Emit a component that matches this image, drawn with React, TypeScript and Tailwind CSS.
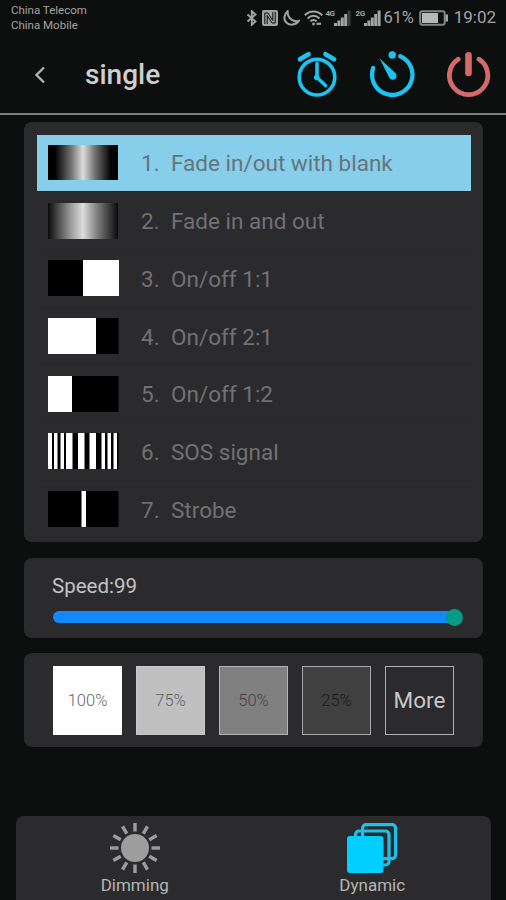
import { useState } from "react";
import type { ReactNode } from "react";

const MODES: { name: string; swatch: ReactNode }[] = [
  { name: "Fade in/out with blank", swatch: <div className="h-[35px] w-[70px] bg-[linear-gradient(90deg,#000_0%,#000_10%,#777_34%,#dcdcdc_50%,#777_66%,#000_90%,#000_100%)]" /> },
  { name: "Fade in and out", swatch: <div className="h-[36px] w-[70px] bg-[linear-gradient(90deg,#0a0a0a_0%,#999_32%,#dcdcdc_50%,#888_68%,#0a0a0a_100%)]" /> },
  { name: "On/off 1:1", swatch: <Bars bars={[[35, 36]]} /> },
  { name: "On/off 2:1", swatch: <Bars bars={[[0, 48]]} /> },
  { name: "On/off 1:2", swatch: <Bars bars={[[0, 24]]} /> },
  { name: "SOS signal", swatch: <Bars bars={[[0, 4], [6, 3.5], [12.5, 3.5], [18, 6.5], [30, 6.5], [41.5, 6.5], [53.5, 3.5], [59.5, 3.5], [65.5, 3.5]]} /> },
  { name: "Strobe", swatch: <Bars bars={[[33.5, 4.5]]} /> },
];

const LEVELS = [
  { label: "100%", style: "bg-white text-[#666] border-white" },
  { label: "75%", style: "bg-[#c0c0c0] text-[#5e5e5e] border-[#cacaca]" },
  { label: "50%", style: "bg-[#808080] text-[#404040] border-[#b4b4b4]" },
  { label: "25%", style: "bg-[#404040] text-[#1c1c1c] border-[#a8a8a8]" },
];

function Bars({ bars }: { bars: number[][] }) {
  return (
    <svg width="71" height="36" viewBox="0 0 71 36">
      <rect width="70.5" height="36" fill="#000" />
      {bars.map(([x, w]) => <rect key={x} x={x} width={w} height="36" fill="#fff" />)}
    </svg>
  );
}

function Signal({ weak }: { weak?: boolean }) {
  return (
    <svg className="-ml-px" width="17" height="16" viewBox="0 0 17 16" fill="currentColor">
      <rect x="0" y="13" width="3" height="3" />
      <rect x="3.4" y="10.5" width="3" height="5.5" />
      <rect x="6.8" y="7.5" width="3" height="8.5" />
      <rect x="10.2" y="4" width="3" height="12" />
      <rect x="13.6" y="0.5" width="3" height="15.5" opacity={weak ? 0.3 : 1} />
    </svg>
  );
}

function StatusBar() {
  return (
    <div className="flex h-9 justify-between pr-[10px] pl-[11px] text-[#a3a3a3]">
      <div className="pt-[3px] text-[11.5px] leading-[15px]">
        <div>China Telecom</div>
        <div>China Mobile</div>
      </div>
      <div className="flex h-[35px] items-center">
        <svg width="12" height="16" viewBox="0 0 12 16" fill="none" stroke="currentColor" strokeWidth="1.9">
          <path d="M1.5 4.5 9.5 11.5 5.8 14.8V1.2L9.5 4.5 1.5 11.5" />
        </svg>
        <svg className="ml-1" width="16" height="16" viewBox="0 0 16 16">
          <rect width="16" height="16" rx="2" fill="currentColor" />
          <path d="M2.8 14V3L6 3 10.8 10.500V2M13.200 2v11L10 13 5.200 5.500V14" fill="none" stroke="#0d0f0e" strokeWidth="1" />
        </svg>
        <svg className="ml-[5px]" width="17" height="16" viewBox="0 0 17 16" fill="none" stroke="currentColor" strokeWidth="2">
          <path d="M4.6 1.2C1 4.5.2 9.4 3.3 12.5c3.4 3.4 9.7 2.6 12.5-1.6C11.6 12.2 4.5 9.5 4.6 1.2Z" />
        </svg>
        <svg className="ml-1" width="19" height="16" viewBox="0 0 19 16" fill="none" stroke="currentColor" strokeWidth="2.1">
          <path d="M.8 5.2C5.8.2 13.2.2 18.2 5.2M3.6 8.4c3.5-3.5 8.3-3.5 11.8 0M6.4 11.3c1.8-1.8 4.4-1.8 6.2 0" />
          <circle cx="9.5" cy="14" r="1.4" fill="currentColor" stroke="none" />
          <path d="M12.5 13.8h4.5" />
        </svg>
        <span className="ml-[3px] h-4 text-[8px] leading-[7px] font-bold tracking-[-0.5px]">4G</span>
        <Signal weak />
        <span className="ml-[5px] h-4 text-[8px] leading-[7px] font-bold tracking-[-0.5px]">2G</span>
        <Signal />
        <span className="ml-[3px] pt-px text-[16.5px] tracking-[-0.2px]">61%</span>
        <svg className="ml-[5px]" width="30" height="16" viewBox="0 0 30 16">
          <rect x="1.2" y="1.2" width="24.5" height="13.6" rx="2" fill="none" stroke="#858585" strokeWidth="2" />
          <rect x="3" y="3" width="16" height="10" fill="#b8b8b8" />
          <rect x="26.5" y="4.5" width="2.5" height="7" fill="currentColor" />
        </svg>
        <span className="ml-[5px] text-[17px]">19:02</span>
      </div>
    </div>
  );
}

function Header() {
  return (
    <header className="flex h-[79px] items-center border-b-2 border-[#7d7d7d] pr-[14px] pl-[34px]">
      <svg width="12" height="18" viewBox="0 0 12 18" fill="none" stroke="#b0b0b0" strokeWidth="2.4">
        <path d="M10 1.5 2.5 9l7.5 7.5" />
      </svg>
      <h1 className="ml-[39px] pt-px text-[28px] font-medium text-[#cfcfcf]">single</h1>
      <div className="mr-px ml-auto flex">
        <svg width="46" height="48" viewBox="0 0 46 48" fill="none" stroke="#1cc3f0" strokeLinecap="round">
          <circle cx="23" cy="26.2" r="17.8" strokeWidth="3.6" />
          <path d="M6 8.300 14.500 3.300M31.500 3.300 40 8.300" strokeWidth="4.800" />
          <path d="M23 12.500V26.500L31.500 34.500" strokeWidth="3.600" />
          <circle cx="22.7" cy="26.5" r="2" fill="#1cc3f0" strokeWidth="1.5" />
        </svg>
        <svg className="ml-[29px]" width="46" height="48" viewBox="0 0 46 48" fill="none" stroke="#1cc3f0" strokeLinecap="round">
          <path d="M31.300 5.200A20.200 20.200 0 1 1 4.200 17" strokeWidth="4.300" />
          <circle cx="23.2" cy="4" r="3.7" fill="#1cc3f0" stroke="none" />
          <path d="M10.500 7.300 26.400 22a3.900 3.900 0 1 1-6.300 4.300Z" fill="#1cc3f0" stroke="none" />
        </svg>
        <svg className="ml-[30px]" width="46" height="48" viewBox="0 0 46 48" fill="none" stroke="#d46a6b" strokeLinecap="round">
          <path d="M34 8.300A19.200 19.200 0 1 1 13.200 8.300" strokeWidth="4.800" />
          <path d="M23.500 4.200V22" strokeWidth="6.600" />
        </svg>
      </div>
    </header>
  );
}

function SunIcon() {
  return (
    <svg width="52" height="52" viewBox="0 0 52 52" stroke="#9d9d9d" strokeWidth="3.4">
      <circle cx="26" cy="26" r="14" fill="#9d9d9d" stroke="none" />
      {[...Array(12)].map((_, i) => <path key={i} d="M26 1v8.5" transform={`rotate(${i * 30} 26 26)`} />)}
    </svg>
  );
}

function LayersIcon() {
  return (
    <svg width="52" height="52" viewBox="0 0 52 52" fill="none" stroke="#1fc0ea" strokeWidth="3.2">
      <rect x="16.6" y="2.6" width="33" height="34" rx="3.5" />
      <path d="M9.5 15V12.5a3.5 3.5 0 0 1 3.5-3.5H39.5a3.5 3.5 0 0 1 3.5 3.5V39.5a3.5 3.5 0 0 1-3.5 3.5H36" />
      <rect x="1" y="14" width="36.5" height="37" rx="3" fill="#00cfff" stroke="none" />
    </svg>
  );
}

export default function App() {
  const [mode, setMode] = useState(0);
  const [tab, setTab] = useState("dynamic");
  const speed = 99;

  return (
    <div className="flex h-[900px] w-[506px] flex-col overflow-hidden bg-[#0d0f0e] font-['Roboto',sans-serif]">
      <StatusBar />
      <Header />

      <main className="flex flex-col pt-[7px] pr-[23px] pl-6">
        <section className="h-[420px] rounded-lg bg-[#2b2b2d] pt-[12.5px] pr-3 pl-[13px]">
          {MODES.map(({ name, swatch }, i) => (
            <button key={name} onClick={() => setMode(i)} className={`flex h-[57.7px] w-full items-center border-b pl-[11px] text-left text-[22.5px] ${mode === i ? "border-[#242426] bg-[#87ceeb] text-[#66747b]" : "border-[#28282a] text-[#717173]"}`}>
              <span className="w-[93px]">{swatch}</span>
              <span className="w-[30px] pt-[3px]">{i + 1}.</span>
              <span className="pt-[3px]">{name}</span>
            </button>
          ))}
        </section>

        <section className="mt-4 h-[80px] rounded-lg bg-[#2b2b2d] pt-[14px] pr-[20px] pl-7">
          <div className="text-[20.5px] leading-7 text-[#c3c3c3]">Speed:{speed}</div>
          <div className="mt-[8.5px] ml-[1px] flex h-[17px] items-center">
            <div className="h-3 rounded-l-full bg-[#1488ff]" style={{ width: `${speed - 2}%` }} />
            <div className="-ml-1 size-[17px] rounded-full bg-[#079a85]" />
          </div>
        </section>

        <section className="mt-[15px] flex h-[94px] items-center gap-[14px] rounded-lg bg-[#2b2b2d] pl-[29px]">
          {LEVELS.map(({ label, style }) => (
            <button key={label} className={`size-[69px] border-[1.5px] pt-[2px] text-[16.5px] font-light ${style}`}>{label}</button>
          ))}
          <button className="size-[69px] border-[1.5px] border-[#b0b0b0] pt-[2px] text-[22.5px] text-[#c8c8c8]">More</button>
        </section>
      </main>

      <nav className="mt-auto mr-[15px] ml-4 grid h-[84px] grid-cols-2 rounded-t-lg bg-[#2b2b2d] text-[17px] text-[#b5b5b5]">
        <button onClick={() => setTab("dimming")} aria-pressed={tab === "dimming"} className="flex flex-col items-center pt-[6px]">
          <SunIcon />
          <span className="leading-[22px]">Dimming</span>
        </button>
        <button onClick={() => setTab("dynamic")} aria-pressed={tab === "dynamic"} className="flex flex-col items-center pt-[6px]">
          <LayersIcon />
          <span className="leading-[22px]">Dynamic</span>
        </button>
      </nav>
    </div>
  );
}
